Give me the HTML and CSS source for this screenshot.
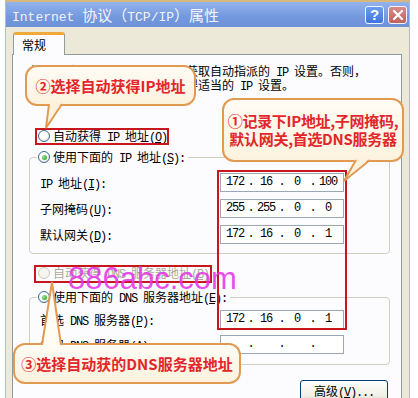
FILE: index.html
```html
<!DOCTYPE html>
<html>
<head>
  <meta charset="UTF-8">
  <title>Internet 协议 (TCP/IP) 属性</title>
  <link rel="stylesheet" href="styles.css">
</head>
<body>
<div class="stage">
  <div class="window">
    <!-- Judul -->
    <div class="titlebar">
      <span class="title"><span class="en">Internet </span>协议（<span class="en">TCP/IP</span>）属性</span>
      <span class="tbtn help">?</span>
      <span class="tbtn close">
        <svg width="12" height="12" viewBox="0 0 12 12"><path d="M2 2L10 10M10 2L2 10" stroke="#fff" stroke-width="2.2" stroke-linecap="round"/></svg>
      </span>
    </div>

    <div class="tabs"><div class="tab">常规</div></div>

    <div class="panel">
      <p class="intro">如果网络支持此功能，则可以获取自动指派的<span class="en"> IP </span>设置。否则，<br>您需要从网络系统管理员处获得适当的<span class="en"> IP </span>设置。</p>

      <div class="opt first"><span class="radio"></span><span>自动获得<span class="en"> IP </span>地址<span class="en">(<u>O</u>)</span></span></div>

      <fieldset class="group one">
        <legend><span class="radio on"></span><span>使用下面的<span class="en"> IP </span>地址<span class="en">(<u>S</u>):</span></span></legend>
        <div class="frow">
          <span class="flabel"><span class="en">IP </span>地址<span class="en">(<u>I</u>):</span></span>
          <span class="ipf en"><span>172</span><span class="dot">.</span><span>16</span><span class="dot">.</span><span>0</span><span class="dot">.</span><span>100</span></span>
        </div>
        <div class="frow">
          <span class="flabel">子网掩码<span class="en">(<u>U</u>):</span></span>
          <span class="ipf en"><span>255</span><span class="dot">.</span><span>255</span><span class="dot">.</span><span>0</span><span class="dot">.</span><span>0</span></span>
        </div>
        <div class="frow">
          <span class="flabel">默认网关<span class="en">(<u>D</u>):</span></span>
          <span class="ipf en"><span>172</span><span class="dot">.</span><span>16</span><span class="dot">.</span><span>0</span><span class="dot">.</span><span>1</span></span>
        </div>
      </fieldset>

      <div class="opt dns dis"><span class="radio off"></span><span>自动获得<span class="en"> DNS </span>服务器地址<span class="en">(<u>B</u>)</span></span></div>

      <fieldset class="group two">
        <legend><span class="radio on"></span><span>使用下面的<span class="en"> DNS </span>服务器地址<span class="en">(<u>E</u>):</span></span></legend>
        <div class="frow">
          <span class="flabel">首选<span class="en"> DNS </span>服务器<span class="en">(<u>P</u>):</span></span>
          <span class="ipf en"><span>172</span><span class="dot">.</span><span>16</span><span class="dot">.</span><span>0</span><span class="dot">.</span><span>1</span></span>
        </div>
        <div class="frow">
          <span class="flabel">备用<span class="en"> DNS </span>服务器<span class="en">(<u>A</u>):</span></span>
          <span class="ipf en"><span></span><span class="dot">.</span><span></span><span class="dot">.</span><span></span><span class="dot">.</span><span></span></span>
        </div>
      </fieldset>

      <button class="adv">高级<span class="en">(<u>V</u>)...</span></button>
    </div>
  </div>

  <!-- Tanda merah -->
  <div class="hl hl-ip"></div>
  <div class="hl hl-dns"></div>
  <div class="hl hl-fields"></div>

  <div class="watermark">886abc.com</div>

  <!-- Keterangan -->
  <div class="callout c2">②选择自动获得IP地址</div>
  <div class="callout c1">①记录下IP地址,子网掩码,<br>默认网关,首选DNS服务器</div>
  <div class="callout c3">③选择自动获的DNS服务器地址</div>

  <svg class="tails" width="418" height="398" viewBox="0 0 418 398">
    <polygon points="49,102 62,102 46,128" fill="#fcf2de"/>
    <polyline points="49,104 46,128 62,104" fill="none" stroke="#e29a52" stroke-width="2"/>
    <polygon points="356,158 370,158 344,181" fill="#fcf2de"/>
    <polyline points="356,160 344,181 370,160" fill="none" stroke="#e29a52" stroke-width="2"/>
    <polygon points="42,347 61,347 52,282" fill="#fffcf4"/>
    <polyline points="42,345 52,282 61,345" fill="none" stroke="#e29a52" stroke-width="2"/>
  </svg>
</div>
</body>
</html>
```

FILE: styles.css
```css
body {
  margin: 0;
  background: #fff;
  font-family: "Noto Sans CJK SC", sans-serif;
  font-size: 12px;
  line-height: 16px;
  color: #000;
}

.stage {
  position: relative;
  width: 418px;
  height: 398px;
  overflow: hidden;
}

.en {
  font-family: "Liberation Mono", monospace;
  font-size: 12px;
  line-height: 1px;
  letter-spacing: -1.2px;
}

/* Jendela */
.window {
  box-sizing: border-box;
  margin-left: 5px;
  width: 405px;
  height: 398px;
  border: 1px solid #d8b67c;
  border-top-width: 2px;
  border-bottom: none;
  background: #ece9d8;
  display: flex;
  flex-direction: column;
}

.titlebar {
  height: 25px;
  flex: none;
  display: flex;
  align-items: center;
  padding-left: 6px;
  background: linear-gradient(#93b3ec, #7398de 60%, #6d92d8);
}

.title {
  color: #f2f4fb;
  font-size: 15px;
  line-height: 25px;
  white-space: nowrap;
}

.title .en {
  font-size: 13px;
  letter-spacing: 0;
}

.tbtn {
  box-sizing: border-box;
  width: 19px;
  height: 18px;
  border: 1px solid #f4f6ff;
  border-radius: 3px;
  display: flex;
  align-items: center;
  justify-content: center;
  color: #fff;
  font-family: "Liberation Sans", sans-serif;
  font-weight: bold;
  font-size: 15px;
}

.help {
  margin-left: auto;
  background: linear-gradient(#6d9cf0, #3f74dc);
}

.close {
  margin-left: 4px;
  margin-right: 2px;
  background: linear-gradient(#d78b86, #c0625c);
}

/* Tab */
.tabs {
  height: 27px;
  flex: none;
  display: flex;
  align-items: flex-start;
  padding-left: 7px;
}

.tab {
  box-sizing: border-box;
  width: 52px;
  height: 23px;
  margin-top: 5px;
  border: 1px solid #919b9c;
  border-top: 3px solid #f2a93b;
  border-bottom: none;
  border-radius: 3px 3px 0 0;
  background: #fcfcfe;
  padding-left: 8px;
  line-height: 20px;
  position: relative;
  z-index: 1;
}

.panel {
  box-sizing: border-box;
  margin-left: 6px;
  width: 390px;
  flex: 1;
  border: 1px solid #919b9c;
  border-bottom: none;
  background: #fcfcfe;
}

.intro {
  margin: 0;
  padding: 9px 0 0 17px;
  line-height: 14px;
  white-space: nowrap;
}

/* Pilihan radio */
.opt {
  display: flex;
  align-items: center;
  gap: 3px;
  height: 16px;
  padding-left: 25px;
  white-space: nowrap;
}

.opt.first {
  margin-top: 36px;
}

.opt.dns {
  margin-top: 11px;
}

.opt.dis {
  color: #aca899;
}

.radio {
  box-sizing: border-box;
  width: 12px;
  height: 12px;
  flex: none;
  border-radius: 50%;
  border: 1px solid #3a6a96;
  background: radial-gradient(circle at 40% 35%, #fff 35%, #dedbcf);
  position: relative;
}

.radio.on::after {
  content: "";
  position: absolute;
  inset: 2.5px;
  border-radius: 50%;
  background: radial-gradient(circle at 35% 35%, #8ee88e, #1d9a1d);
}

.radio.off {
  border-color: #cac8bb;
  background: #f6f5ef;
}

/* Kotak grup */
.group {
  margin: 5px 11px 0 16px;
  padding: 8px 0 9px 7px;
  border: 1px solid #d0d0bf;
  border-radius: 4px;
  min-width: 0;
}

.group legend {
  height: 16px;
  padding: 0 3px 0 1px;
  display: flex;
  align-items: center;
  gap: 3px;
  white-space: nowrap;
}

.group.two {
  margin-top: 8px;
  padding-top: 5px;
  padding-bottom: 10px;
}

.frow {
  display: flex;
  align-items: center;
  height: 19px;
  padding-left: 3px;
}

.frow + .frow {
  margin-top: 7px;
}

.two .frow + .frow {
  margin-top: 6px;
}

.flabel {
  width: 180px;
  flex: none;
  white-space: nowrap;
}

.ipf {
  box-sizing: border-box;
  width: 124px;
  height: 19px;
  border: 1px solid #9aa7b5;
  background: #fff;
  display: flex;
  align-items: center;
  padding-left: 3px;
  line-height: 17px;
}

.ipf span {
  width: 22px;
  text-align: center;
}

.ipf .dot {
  width: 9px;
}

.adv {
  display: block;
  box-sizing: border-box;
  width: 88px;
  height: 23px;
  margin: 15px 13px 0 auto;
  border: 1px solid #003c74;
  border-radius: 3px;
  background: linear-gradient(#ffffff, #f0efe6 70%, #d8d5c6);
  font-family: "Noto Sans CJK SC", sans-serif;
  font-size: 12px;
  line-height: 16px;
  color: #000;
  padding: 0 0 2px;
}

/* Tanda merah dan keterangan */
.hl {
  position: absolute;
  box-sizing: border-box;
  border: 2px solid #c8161d;
}

.hl-ip {
  left: 35px;
  top: 128px;
  width: 134px;
  height: 17px;
}

.hl-dns {
  left: 34px;
  top: 265px;
  width: 178px;
  height: 18px;
}

.hl-fields {
  left: 217px;
  top: 170px;
  width: 130px;
  height: 160px;
}

.watermark {
  position: absolute;
  left: 68px;
  top: 263px;
  font-family: "Liberation Sans", sans-serif;
  font-size: 31px;
  line-height: 1;
  color: rgba(228, 52, 232, 0.88);
}

.callout {
  position: absolute;
  box-sizing: border-box;
  border: 2px solid #e29a52;
  border-radius: 12px;
  background: linear-gradient(#fffcf4, #fcf2de);
  color: #e3262b;
  font-weight: bold;
  font-size: 15px;
  line-height: 18px;
  display: flex;
  align-items: center;
  justify-content: center;
  text-align: center;
  white-space: nowrap;
}

.c2 {
  left: 25px;
  top: 65px;
  width: 171px;
  height: 41px;
}

.c1 {
  left: 222px;
  top: 98px;
  width: 182px;
  height: 64px;
  letter-spacing: -0.3px;
}

.c3 {
  left: 13px;
  top: 343px;
  width: 228px;
  height: 41px;
}

.tails {
  position: absolute;
  left: 0;
  top: 0;
  pointer-events: none;
}
```
